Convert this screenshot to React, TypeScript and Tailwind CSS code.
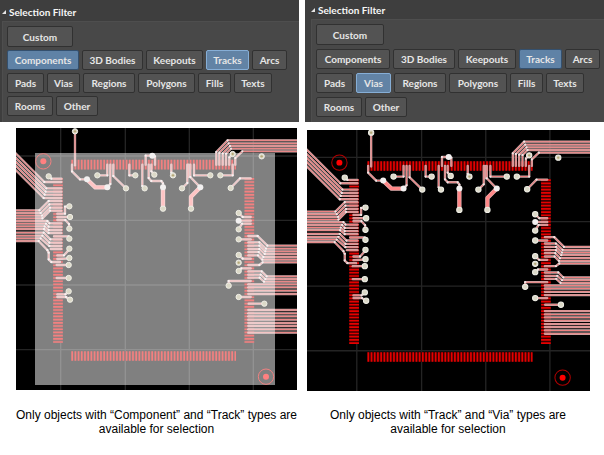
import { useState } from "react";

type Filter = { name: string; width: string };
type Point = [number, number];

const leftRows: Filter[][] = [
  [
    { name: "Components", width: "w-[72px]" },
    { name: "3D Bodies", width: "w-[61px]" },
    { name: "Keepouts", width: "w-[57px]" },
    { name: "Tracks", width: "w-[43px]" },
    { name: "Arcs", width: "w-[35px]" },
  ],
  [
    { name: "Pads", width: "w-[37px]" },
    { name: "Vias", width: "w-[33px]" },
    { name: "Regions", width: "w-[52px]" },
    { name: "Polygons", width: "w-[57px]" },
    { name: "Fills", width: "w-[33px]" },
    { name: "Texts", width: "w-[38px]" },
  ],
  [
    { name: "Rooms", width: "w-[46px]" },
    { name: "Other", width: "w-[42px]" },
  ],
];

const rightRows: Filter[][] = [
  [
    { name: "Components", width: "w-[74px]" },
    { name: "3D Bodies", width: "w-[62px]" },
    { name: "Keepouts", width: "w-[58px]" },
    { name: "Tracks", width: "w-[43px]" },
    { name: "Arcs", width: "w-[35px]" },
  ],
  [
    { name: "Pads", width: "w-[37px]" },
    { name: "Vias", width: "w-[35px]" },
    { name: "Regions", width: "w-[52px]" },
    { name: "Polygons", width: "w-[58px]" },
    { name: "Fills", width: "w-[33px]" },
    { name: "Texts", width: "w-[38px]" },
  ],
  [
    { name: "Rooms", width: "w-[46px]" },
    { name: "Other", width: "w-[42px]" },
  ],
];

function FilterButton({
  label,
  size,
  on,
  focused,
  onClick,
}: {
  label: string;
  size: string;
  on: boolean;
  focused: boolean;
  onClick: () => void;
}) {
  const tone = focused
    ? "border-[#86aed6] bg-[#6283a5]"
    : on
      ? "border-[#34506e] bg-[#5f82a6]"
      : "border-[#313131] bg-[#535353]";
  return (
    <button
      type="button"
      aria-pressed={on}
      onClick={onClick}
      className={`shrink-0 rounded-[2px] border text-center text-[10px] leading-4 font-bold whitespace-nowrap text-[#e6e6e6] ${size} ${tone}`}
    >
      {label}
    </button>
  );
}

function SelectionFilter({
  rows,
  initial,
  initialFocus,
  side,
}: {
  rows: Filter[][];
  initial: string[];
  initialFocus: string;
  side: "left" | "right";
}) {
  const [active, setActive] = useState(initial);
  const [last, setLast] = useState(initialFocus);
  const toggle = (name: string) => {
    setLast(name);
    setActive(active.includes(name) ? active.filter((n) => n !== name) : [...active, name]);
  };
  const left = side === "left";
  return (
    <section
      className={`flex h-[122px] flex-col bg-[#3e3e3e] font-[Lato,'Open_Sans',sans-serif] ${left ? "pl-[2px]" : "pl-[6px]"}`}
    >
      <h2
        className={`flex items-center gap-[3px] text-[10px] leading-4 font-bold text-[#f6f6f6] ${left ? "h-[21px] pt-[2px]" : "h-[19px]"}`}
      >
        <svg width="4" height="4" viewBox="0 0 4 4" aria-hidden="true">
          <path d="M4 0V4H0Z" fill="#e6e6e6" />
        </svg>
        Selection Filter
      </h2>
      <div
        className={`flex flex-1 flex-col border-t border-l border-[#4e4e4e] bg-[#484848] pt-1 pl-1 ${left ? "gap-[3px]" : "gap-1"}`}
      >
        <FilterButton
          label="Custom"
          size={left ? "w-[66px] h-[21px]" : "w-[68px] h-[21px]"}
          on={false}
          focused={false}
          onClick={() => setActive([])}
        />
        {rows.map((row) => (
          <div key={row[0].name} className="flex gap-[3px]">
            {row.map((f) => (
              <FilterButton
                key={f.name}
                label={f.name}
                size={`h-5 ${f.width}`}
                on={active.includes(f.name)}
                focused={last === f.name && active.includes(f.name)}
                onClick={() => toggle(f.name)}
              />
            ))}
          </div>
        ))}
      </div>
    </section>
  );
}

const EDGE_L = -20;
const EDGE_R = 880;

const tracks: Point[][] = [
  // fan-in from the upper left
  [[EDGE_L, 57], [103, 180], [154, 180]],
  [[EDGE_L, 70], [109, 199], [154, 199]],
  [[EDGE_L, 82], [107, 209], [154, 209]],
  [[EDGE_L, 94], [104, 218], [154, 218]],
  [[EDGE_L, 107], [101, 228], [154, 228]],
  [[116, 163], [124, 170], [154, 170]],
  // left bus
  [[EDGE_L, 265], [88, 265], [116, 237], [154, 237]],
  [[EDGE_L, 273], [92, 273], [118, 247], [154, 247]],
  [[EDGE_L, 281], [96, 281], [120, 257], [154, 257]],
  [[EDGE_L, 289], [97, 289], [120, 266], [154, 266]],
  [[EDGE_L, 297], [112, 297], [118, 304], [154, 304]],
  [[EDGE_L, 305], [108, 305], [116, 314], [154, 314]],
  [[EDGE_L, 313], [104, 313], [116, 324], [154, 324]],
  [[EDGE_L, 321], [102, 321], [116, 333], [154, 333]],
  [[EDGE_L, 332], [101, 332], [121, 352], [154, 352]],
  [[EDGE_L, 341], [97, 341], [118, 362], [154, 362]],
  [[EDGE_L, 349], [92, 349], [118, 372], [154, 372]],
  [[EDGE_L, 357], [86, 357], [112, 384], [116, 392], [116, 412], [124, 420], [150, 420]],
  [[122, 381], [154, 381]],
  // left escapes
  [[142, 275], [165, 275], [165, 254], [178, 253]],
  [[142, 285], [180, 285]],
  [[142, 294], [166, 294], [177, 306], [178, 320]],
  [[132, 343], [176, 343], [178, 350]],
  [[142, 400], [162, 400], [178, 382]],
  [[142, 411], [178, 409]],
  [[140, 429], [176, 429]],
  [[140, 468], [176, 468]],
  [[142, 517], [166, 517], [176, 508]],
  [[142, 525], [168, 525], [180, 534]],
  // top side
  [[195, 28], [195, 130]],
  [[186, 128], [186, 148], [210, 172], [231, 172]],
  [[262, 160], [292, 160], [292, 128]],
  [[301, 128], [301, 186], [292, 196]],
  [[310, 128], [310, 162], [348, 199]],
  [[358, 128], [358, 160], [376, 160]],
  [[397, 128], [397, 192], [404, 199]],
  [[407, 128], [407, 101], [427, 101]],
  [[435, 128], [435, 103], [427, 101]],
  [[424, 128], [424, 148], [433, 158]],
  [[416, 128], [416, 168], [424, 177], [454, 177], [459, 184], [459, 196]],
  [[484, 128], [484, 152], [489, 160]],
  [[532, 128], [532, 183], [516, 199]],
  [[536, 128], [536, 165]],
  [[541, 128], [541, 165], [571, 196]],
  [[552, 128], [552, 160], [601, 160]],
  [[631, 160], [668, 160], [668, 128]],
  [[619, 128], [619, 90], [653, 55], [EDGE_R, 55]],
  [[628, 128], [628, 92], [656, 64], [EDGE_R, 64]],
  [[638, 128], [638, 94], [660, 72], [EDGE_R, 72]],
  [[648, 128], [648, 95], [663, 80], [EDGE_R, 80]],
  [[658, 128], [658, 106], [668, 96]],
  [[676, 128], [676, 108], [697, 88], [EDGE_R, 88]],
  [[662, 198], [690, 169], [722, 169]],
  // right escapes
  [[686, 273], [698, 285], [722, 285]],
  [[686, 296], [722, 296]],
  [[686, 322], [696, 305], [722, 305]],
  [[686, 352], [722, 352]],
  [[686, 399], [698, 410], [722, 410]],
  [[686, 447], [694, 439], [722, 439]],
  [[656, 491], [656, 477], [722, 477]],
  [[686, 525], [722, 525]],
  [[716, 545], [763, 545]],
  // right bus
  [[715, 342], [743, 342], [772, 371], [EDGE_R, 371]],
  [[715, 361], [748, 361], [768, 380], [EDGE_R, 380]],
  [[715, 371], [748, 371], [766, 388], [EDGE_R, 388]],
  [[715, 381], [748, 381], [764, 396], [EDGE_R, 396]],
  [[715, 390], [746, 390], [760, 405], [EDGE_R, 405]],
  [[715, 400], [744, 400], [757, 413], [EDGE_R, 413]],
  [[715, 429], [748, 429], [758, 421], [EDGE_R, 421]],
  [[715, 448], [755, 448], [770, 463], [EDGE_R, 463]],
  [[715, 458], [752, 458], [766, 471], [EDGE_R, 471]],
  [[715, 467], [749, 467], [762, 479], [EDGE_R, 479]],
  ...[487, 496, 506, 516, 564, 574, 583, 593, 603, 612, 622, 632].map(
    (y): Point[] => [[715, y], [EDGE_R, y]],
  ),
];

const wideTracks: Point[][] = [
  [[231, 172], [256, 196], [292, 196]],
  [[459, 196], [459, 260]],
  [[571, 196], [543, 224], [543, 260]],
];

const vias: Point[] = [
  [195, 28], [116, 163], [178, 253], [180, 285], [178, 320], [178, 350], [178, 380],
  [178, 408], [176, 429], [176, 468], [176, 508], [180, 533], [262, 160], [348, 199],
  [376, 160], [404, 199], [433, 158], [459, 260], [489, 160], [516, 199], [543, 260],
  [601, 160], [631, 160], [668, 96], [755, 103], [662, 198], [686, 273], [686, 322],
  [686, 352], [686, 399], [686, 422], [686, 447], [656, 491], [686, 525], [763, 545],
];

const joints: Point[] = [[231, 172], [292, 196], [427, 101], [459, 196], [571, 196], [686, 296]];

const holes: Point[] = [[195, 28], [755, 103], [686, 422], [489, 160], [668, 96]];

const fiducials: Point[] = [[100, 118], [768, 764]];

const toPoints = (p: Point[]) => p.map((q) => q.join(",")).join(" ");

function Board({
  id,
  viewBox,
  masked,
  label,
  className,
}: {
  id: string;
  viewBox: string;
  masked: boolean;
  label: string;
  className: string;
}) {
  return (
    <svg role="img" aria-label={label} viewBox={viewBox} preserveAspectRatio="none" className={className}>
      <defs>
        <marker id={id} viewBox="-4 -4 8 8" markerWidth="8" markerHeight="8" markerUnits="userSpaceOnUse">
          <circle r="3.4" fill="#efe4e4" />
        </marker>
      </defs>
      <rect x="-30" y="-30" width="950" height="900" fill="#000" />
      <g stroke="#242424" strokeWidth="4">
        {[152, 346, 538, 730].map((x) => (
          <line key={x} x1={x} x2={x} y1="-30" y2="870" />
        ))}
        {[102, 295, 489, 683].map((y) => (
          <line key={y} y1={y} y2={y} x1="-30" x2="920" />
        ))}
      </g>
      <g stroke={masked ? "#2a0000" : "#3c0000"} strokeWidth="29">
        <path d="M183 128H678M183 702H678M144 167V663M718 167V663" />
      </g>
      <g stroke="#e60000" strokeWidth="29" strokeDasharray="5 4.6">
        <path d="M184 128H678" />
        <path d="M184 702H678" />
        <path d="M144 168V663" />
        <path d="M718 168V663" />
      </g>
      {fiducials.map(([x, y]) => (
        <g key={x}>
          <circle cx={x} cy={y} r="23" fill="none" stroke={masked ? "#e00000" : "#b00000"} strokeWidth="3" />
          <circle cx={x} cy={y} r="9" fill="#ff0000" />
        </g>
      ))}
      <g fill="none" strokeLinejoin="round" strokeLinecap="round">
        {tracks.map((t, i) => (
          <g key={i}>
            <polyline points={toPoints(t)} stroke="#c8aaaa" strokeWidth="7" />
            <polyline
              points={toPoints(t)}
              stroke="#ee8080"
              strokeWidth="3"
              markerMid={`url(#${id})`}
            />
          </g>
        ))}
        {wideTracks.map((t, i) => (
          <g key={i}>
            <polyline points={toPoints(t)} stroke="#e8b4b4" strokeWidth="13" />
            <polyline points={toPoints(t)} stroke="#ff8888" strokeWidth="9" />
          </g>
        ))}
      </g>
      {masked && <path d="M75 93H795V789H75Z" fill="#fff" fillOpacity="0.5" />}
      {vias.map(([x, y], i) => (
        <circle key={i} cx={x} cy={y} r="8" fill="#dcd9c8" stroke="#efeee6" strokeWidth="3" />
      ))}
      {joints.map(([x, y], i) => (
        <circle key={i} cx={x} cy={y} r="9" fill="#f2f0f0" />
      ))}
      {holes.map(([x, y], i) => (
        <circle key={i} cx={x} cy={y} r="3.5" fill="#b5a878" />
      ))}
    </svg>
  );
}

export default function App() {
  return (
    <main className="grid min-h-screen grid-cols-[299fr_299fr] gap-x-[6px] bg-white text-black">
      <article className="flex min-w-0 flex-col">
        <SelectionFilter
          side="left"
          rows={leftRows}
          initial={["Components", "Tracks"]}
          initialFocus="Tracks"
        />
        <figure className="flex flex-col pt-[6px]">
          <div className="pr-[2px] pl-4">
            <Board
              id="joint-left"
              label="Circuit board with components and tracks selectable"
              viewBox="18 18 843 786"
              masked
              className="block h-[262px] w-full"
            />
          </div>
          <figcaption className="pt-[18px] pl-[14px] text-center font-['Liberation_Sans',Arial,sans-serif] text-[12px] leading-[14px]">
            Only objects with “Component” and “Track” types are
            <br />
            available for selection
          </figcaption>
        </figure>
      </article>
      <article className="flex min-w-0 flex-col">
        <SelectionFilter side="right" rows={rightRows} initial={["Tracks", "Vias"]} initialFocus="Vias" />
        <figure className="flex flex-col pt-2">
          <div className="pr-[14px] pl-[2px]">
            <Board
              id="joint-right"
              label="Circuit board with tracks and vias selectable"
              viewBox="3 20 847 784"
              masked={false}
              className="block h-[261px] w-full"
            />
          </div>
          <figcaption className="pt-[17px] pr-[13px] text-center font-['Liberation_Sans',Arial,sans-serif] text-[12px] leading-[14px]">
            Only objects with “Track” and “Via” types are
            <br />
            available for selection
          </figcaption>
        </figure>
      </article>
    </main>
  );
}
